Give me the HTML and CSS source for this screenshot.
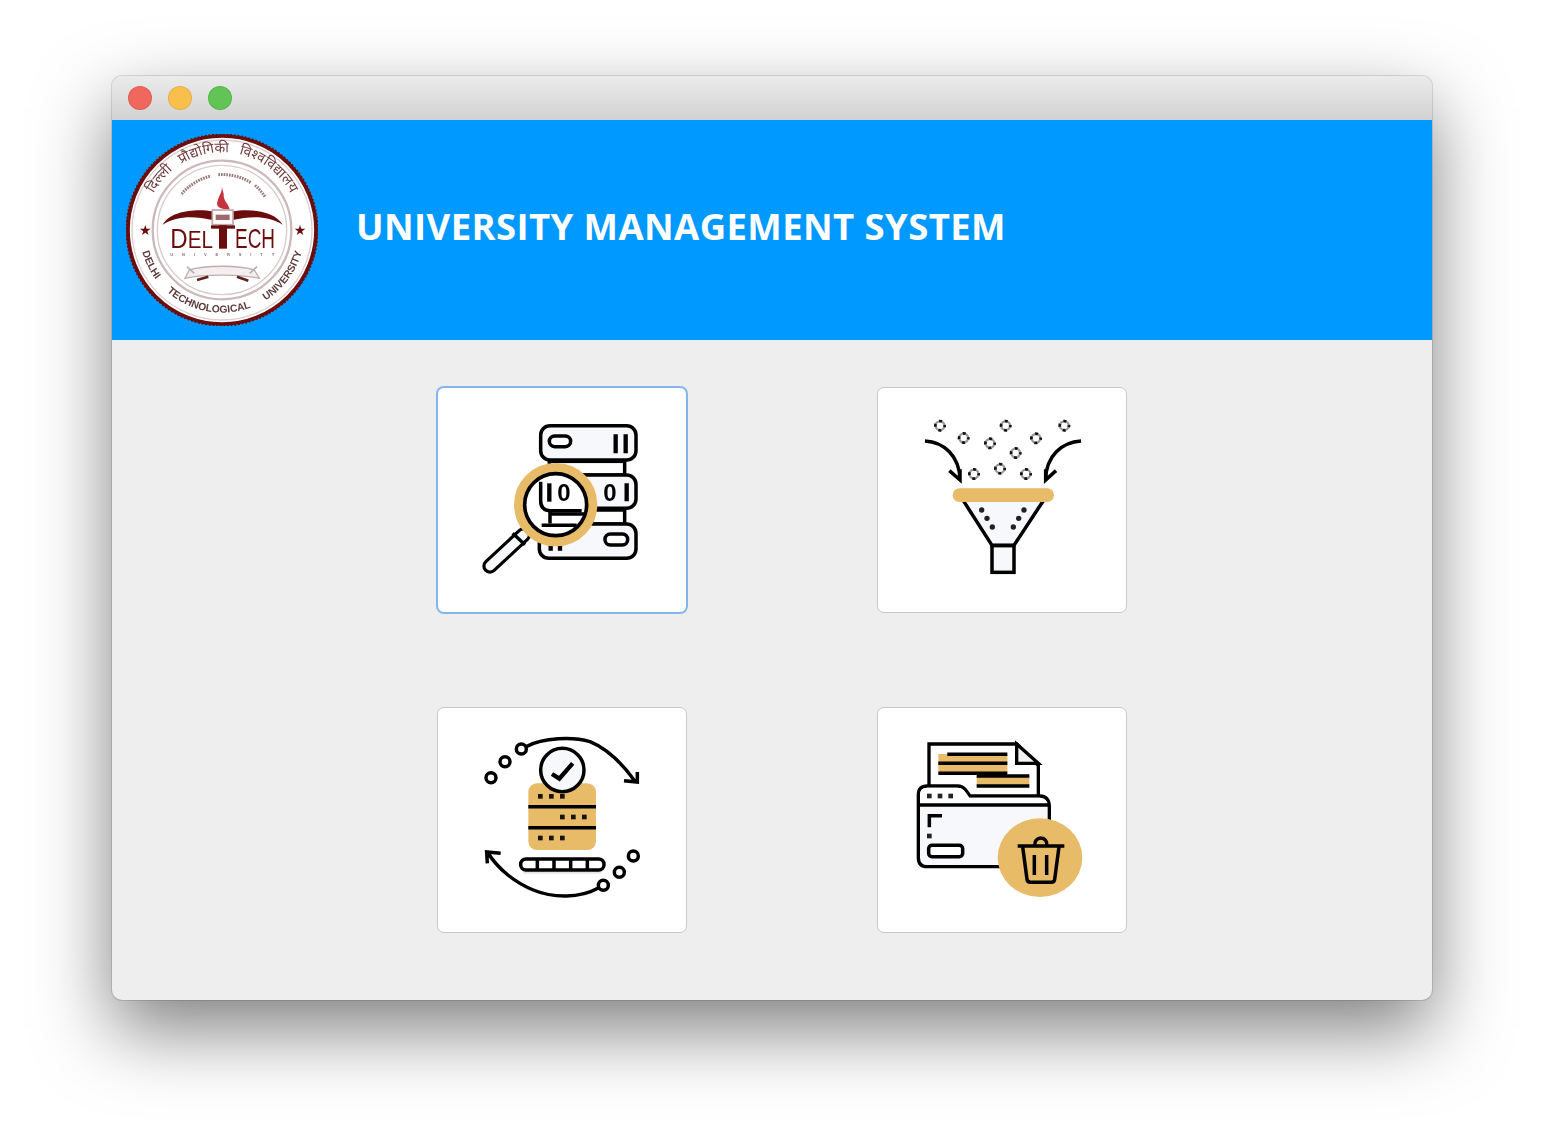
FILE: index.html
```html
<!DOCTYPE html>
<html lang="en">
<head>
    <meta charset="UTF-8">
    <meta name="viewport" content="width=device-width, initial-scale=1.0">
    <title>University Management System</title>
    <link rel="stylesheet" href="styles.css">
</head>
<body>
    <div class="window">
        <!-- Title bar with the three traffic lights -->
        <div class="titlebar">
            <span class="light light-red"></span>
            <span class="light light-yellow"></span>
            <span class="light light-green"></span>
        </div>

        <!-- Blue header with seal and system name -->
        <header class="header">
            <svg class="logo" viewBox="45 192 576 576" aria-label="Delhi Technological University seal">
                <defs>
                    <path id="ring-top" d="M100 480 A233 233 0 0 1 566 480"/>
                    <path id="ring-bottom" d="M85 480 A248 248 0 0 0 581 480"/>
                </defs>
                <circle cx="333" cy="480" r="282" fill="#fff" stroke="#6b0d0d" stroke-width="11"/>
                <circle cx="333" cy="480" r="287" fill="none" stroke="#6b0d0d" stroke-width="5" stroke-dasharray="6 5"/>
                <circle cx="333" cy="480" r="270" fill="none" stroke="#dccdcd" stroke-width="4"/>
                <circle cx="333" cy="480" r="208" fill="none" stroke="#cbb9b9" stroke-width="7"/>
                <circle cx="333" cy="480" r="194" fill="none" stroke="#d9cccc" stroke-width="4"/>

                <text class="seal-hindi"><textPath href="#ring-top" startOffset="50%" text-anchor="middle">दिल्ली  प्रौद्योगिकी  विश्वविद्यालय</textPath></text>
                <text class="seal-name"><textPath href="#ring-bottom" startOffset="50%" text-anchor="middle">DELHI TECHNOLOGICAL UNIVERSITY</textPath></text>
                <text class="seal-star" x="103" y="494">★</text>
                <text class="seal-star" x="567" y="494">★</text>

                <!-- motto, too small to read -->
                <path d="M212 372 A165 165 0 0 1 300 318" class="seal-motto"/>
                <path d="M322 314 A165 165 0 0 1 420 338" class="seal-motto"/>
                <path d="M432 346 A165 165 0 0 1 462 380" class="seal-motto"/>

                <!-- torch and wings -->
                <path d="M330 340 C338 362 326 372 320 392 C314 408 322 418 356 418 C352 400 336 392 338 372 Z" fill="#c5343c"/>
                <path d="M155 464 C180 420 260 416 305 424 L305 450 C250 438 200 436 155 464 Z" fill="#6b0d0d"/>
                <path d="M515 464 C490 420 410 416 365 424 L365 450 C420 438 470 436 515 464 Z" fill="#6b0d0d"/>
                <rect x="304" y="420" width="62" height="44" fill="#fff" stroke="#c2a7a7" stroke-width="5"/>
                <rect x="314" y="434" width="42" height="16" fill="#a06a6a"/>
                <rect x="300" y="466" width="72" height="10" fill="#6b0d0d"/>
                <rect x="324" y="466" width="24" height="70" fill="#6b0d0d"/>

                <text class="seal-big" x="178" y="535" textLength="128" lengthAdjust="spacingAndGlyphs">D<tspan class="seal-small">EL</tspan></text>
                <text class="seal-small seal-ech" x="372" y="535" textLength="120" lengthAdjust="spacingAndGlyphs">ECH</text>
                <text class="seal-spaced" x="178" y="558" textLength="312">UNIVERSITY</text>

                <!-- ribbon -->
                <path d="M235 600 C280 585 385 585 430 600 L445 625 C385 612 280 612 222 625 Z" fill="#f4eeee" stroke="#bfaeae" stroke-width="4"/>
                <path d="M228 590 L250 610 M438 590 L416 610" stroke="#bfaeae" stroke-width="5"/>
                <path d="M258 630 L292 620 M378 620 L412 632" stroke="#5c2020" stroke-width="8"/>
            </svg>
            <h1 class="title">UNIVERSITY MANAGEMENT SYSTEM</h1>
        </header>

        <!-- The four action buttons -->
        <main class="actions">
            <button class="action action-focus" aria-label="Search records">
                <svg class="icon" viewBox="24 24 744 672">
                    <g class="line">
                        <rect class="soft" x="332" y="137" width="286" height="103" rx="28"/>
                        <rect class="paper" x="358" y="244" width="226" height="41"/>
                        <rect class="soft" x="332" y="285" width="286" height="100" rx="28"/>
                        <rect class="paper" x="358" y="390" width="226" height="42"/>
                        <rect class="soft" x="328" y="432" width="290" height="103" rx="28"/>
                        <rect class="paper" x="358" y="168" width="64" height="32" rx="16"/>
                        <rect class="paper" x="525" y="462" width="68" height="33" rx="16"/>
                        <path class="heavy" d="M557 163 V220 M587 163 V220 M590 310 V364 M362 498 V512 M390 498 V512"/>
                    </g>
                    <text class="bits" x="520" y="362">0</text>
                    <!-- handle -->
                    <path d="M180 558 L280 465" stroke="#000" stroke-width="46" stroke-linecap="round"/>
                    <path d="M180 558 L280 465" stroke="#f6f8fb" stroke-width="27" stroke-linecap="round"/>
                    <path d="M248 460 L285 494" stroke="#000" stroke-width="10"/>
                    <!-- lens -->
                    <circle cx="377" cy="374" r="95" fill="#fff"/>
                    <g class="line">
                        <path d="M332 305 V362 Q332 392 362 392 H455"/>
                        <path d="M360 395 V430 M360 402 H462 M335 436 H440"/>
                        <path class="heavy" d="M358 310 V365"/>
                    </g>
                    <text class="bits" x="382" y="362">0</text>
                    <circle cx="377" cy="374" r="110" fill="none" stroke="#e8bb69" stroke-width="30"/>
                    <circle cx="377" cy="374" r="93" fill="none" stroke="#000" stroke-width="11"/>
                </svg>
            </button>

            <button class="action" aria-label="Filter records">
                <svg class="icon" viewBox="24 24 744 672">
                    <defs>
                        <g id="grain">
                            <circle r="13" fill="#fff" stroke="#999" stroke-width="7"/>
                            <circle r="14" fill="none" stroke="#111" stroke-width="8" stroke-dasharray="9 13" stroke-dashoffset="4.5"/>
                        </g>
                    </defs>
                    <use href="#grain" x="210" y="137"/>
                    <use href="#grain" x="407" y="137"/>
                    <use href="#grain" x="583" y="137"/>
                    <use href="#grain" x="281" y="174"/>
                    <use href="#grain" x="360" y="190"/>
                    <use href="#grain" x="498" y="175"/>
                    <use href="#grain" x="437" y="219"/>
                    <use href="#grain" x="312" y="282"/>
                    <use href="#grain" x="390" y="266"/>
                    <use href="#grain" x="468" y="282"/>
                    <g class="line">
                        <path d="M165 183 C222 186 268 228 270 298 M238 272 L270 300 L270 268"/>
                        <path d="M633 183 C576 186 528 228 527 298 M558 272 L527 300 L527 268"/>
                    </g>
                    <path d="M280 362 H520 L432 496 H366 Z" fill="#f6f8fb"/>
                    <g class="line">
                        <path d="M280 362 L366 496 H432 L520 362"/>
                        <rect class="soft" x="366" y="497" width="66" height="80"/>
                    </g>
                    <rect x="248" y="325" width="304" height="41" rx="20" fill="#e8bb69"/>
                    <g fill="#222">
                        <circle cx="335" cy="390" r="8"/>
                        <circle cx="351" cy="415" r="8"/>
                        <circle cx="367" cy="441" r="8"/>
                        <circle cx="462" cy="390" r="8"/>
                        <circle cx="446" cy="415" r="8"/>
                        <circle cx="430" cy="441" r="8"/>
                    </g>
                </svg>
            </button>

            <button class="action" aria-label="Verify records">
                <svg class="icon" viewBox="24 24 744 672">
                    <rect x="295" y="250" width="203" height="200" rx="26" fill="#e8bb69"/>
                    <rect x="280" y="512" width="234" height="9" fill="#e4e4e4"/>
                    <g class="line">
                        <path d="M295 320 H498 M295 383 H498"/>
                        <circle class="soft" cx="397" cy="210" r="65"/>
                        <path class="heavy" d="M366 222 L388 236 L428 190"/>
                        <rect class="paper" x="272" y="477" width="250" height="33" rx="16"/>
                        <path d="M322 477 V510 M372 477 V510 M422 477 V510 M472 477 V510"/>
                        <circle class="paper" cx="183" cy="233" r="15"/>
                        <circle class="paper" cx="225" cy="185" r="15"/>
                        <circle class="paper" cx="274" cy="147" r="15"/>
                        <circle class="paper" cx="610" cy="468" r="15"/>
                        <circle class="paper" cx="568" cy="517" r="15"/>
                        <circle class="paper" cx="520" cy="556" r="15"/>
                        <path d="M288 140 C340 112 430 110 480 125 C530 145 580 195 616 245 M582 242 L622 246 L622 216"/>
                        <path d="M505 564 C450 595 370 595 310 570 C260 550 205 510 172 456 M172 490 L170 456 L212 460"/>
                    </g>
                    <g fill="#1a1208">
                        <rect x="324" y="282" width="14" height="14"/>
                        <rect x="357" y="282" width="14" height="14"/>
                        <rect x="390" y="282" width="14" height="14"/>
                        <rect x="390" y="344" width="14" height="14"/>
                        <rect x="423" y="344" width="14" height="14"/>
                        <rect x="456" y="344" width="14" height="14"/>
                        <rect x="324" y="407" width="14" height="14"/>
                        <rect x="357" y="407" width="14" height="14"/>
                        <rect x="390" y="407" width="14" height="14"/>
                    </g>
                </svg>
            </button>

            <button class="action" aria-label="Delete records">
                <svg class="icon" viewBox="24 24 744 672">
                    <path d="M177 262 V132 H440 L505 197 V292 H177 Z" fill="#fff" stroke="#000" stroke-width="10"/>
                    <path d="M440 132 V190 H505 Z" fill="#f1f3f7" stroke="#000" stroke-width="10"/>
                    <rect x="205" y="162" width="207" height="58" fill="#e8bb69"/>
                    <rect x="320" y="228" width="158" height="30" fill="#e8bb69"/>
                    <g class="line">
                        <path d="M232 163 H412 M205 190 H412 M205 220 H412 M320 228 H478 M320 258 H478"/>
                    </g>
                    <path d="M145 285 Q145 258 172 258 H262 Q278 258 287 270 L300 288 H510 Q538 290 538 320 V500 H172 Q145 500 145 473 Z" fill="#f6f8fb" stroke="#000" stroke-width="10"/>
                    <path d="M150 313 V285 Q150 263 172 263 H262 Q276 263 284 274 L298 293 H510 Q531 295 533 313 Z" fill="#fff"/>
                    <g class="line">
                        <path d="M145 315 H538"/>
                        <path d="M178 382 V347 H216"/>
                        <rect class="paper" x="176" y="436" width="102" height="34" rx="10"/>
                    </g>
                    <g fill="#222">
                        <rect x="171" y="281" width="14" height="14"/>
                        <rect x="203" y="281" width="14" height="14"/>
                        <rect x="235" y="281" width="14" height="14"/>
                        <rect x="171" y="401" width="14" height="14"/>
                    </g>
                    <ellipse cx="510" cy="473" rx="127" ry="118" fill="#e8bb69"/>
                    <g class="line">
                        <path d="M443 438 H583"/>
                        <path d="M495 436 A18 18 0 1 1 530 436"/>
                        <path d="M458 440 L471 538 Q472 547 482 547 H543 Q553 547 554 538 L567 440"/>
                        <path d="M493 465 V525 M530 465 V525"/>
                    </g>
                </svg>
            </button>
        </main>
    </div>
</body>
</html>
```

FILE: styles.css
```css
/* General Reset */
html, body {
    margin: 0;
    padding: 0;
    background: #ffffff;
}

body {
    height: 1148px;
    padding: 76px 112px 0;
    box-sizing: border-box;
    overflow: hidden;
    font-family: "Open Sans", sans-serif;
}

/* Main Window */
.window {
    width: 1320px;
    height: 924px;
    display: flex;
    flex-direction: column;
    background: #eeeeee;
    border-radius: 10px;
    overflow: hidden;
    box-shadow: 0 30px 75px rgba(0, 0, 0, 0.5), 0 0 0 1px rgba(0, 0, 0, 0.12);
}

/* Title Bar */
.titlebar {
    height: 44px;
    flex: none;
    display: flex;
    align-items: center;
    gap: 16px;
    padding-left: 16px;
    box-sizing: border-box;
    background: linear-gradient(#ebebeb, #d2d2d2);
}

.light {
    width: 24px;
    height: 24px;
    border-radius: 50%;
    box-sizing: border-box;
    border: 1px solid rgba(0, 0, 0, 0.08);
}

.light-red { background: #f0675d; }
.light-yellow { background: #f8bf4d; }
.light-green { background: #61c454; }

/* Header */
.header {
    height: 220px;
    flex: none;
    display: flex;
    align-items: center;
    gap: 38px;
    padding-left: 14px;
    background: #0099ff;
}

.logo {
    width: 192px;
    height: 192px;
    flex: none;
    filter: blur(0.6px);
}

.title {
    margin: 0 0 8px;
    font-size: 36.5px;
    font-weight: 700;
    letter-spacing: 0.4px;
    color: #ffffff;
    white-space: nowrap;
}

/* Seal text */
.seal-hindi {
    font-family: "Noto Sans", sans-serif;
    font-size: 42px;
    word-spacing: 20px;
    fill: #6e3a3a;
}

.seal-name {
    font-family: "Liberation Sans", sans-serif;
    font-size: 31px;
    font-weight: bold;
    word-spacing: 40px;
    fill: #5f3c3c;
}

.seal-motto {
    fill: none;
    stroke: #9a7a7a;
    stroke-width: 9;
    stroke-dasharray: 5 3;
}

.seal-star {
    font-family: "DejaVu Sans", sans-serif;
    font-size: 42px;
    text-anchor: middle;
    fill: #6b0d0d;
}

.seal-big {
    font-family: "Liberation Sans", sans-serif;
    font-size: 84px;
    fill: #6b0d0d;
}

.seal-small {
    font-family: "Liberation Sans", sans-serif;
    font-size: 72px;
    fill: #6b0d0d;
}

.seal-ech {
    font-size: 82px;
}

.seal-spaced {
    font-family: "Liberation Sans", sans-serif;
    font-size: 12px;
    font-weight: bold;
    fill: #8a6a6a;
}

/* Buttons */
.actions {
    display: grid;
    grid-template-columns: 250px 250px;
    grid-auto-rows: 226px;
    column-gap: 190px;
    row-gap: 94px;
    padding: 47px 0 0 325px;
}

.action {
    display: block;
    padding: 0;
    background: #ffffff;
    border: 1px solid #c8c8c8;
    border-radius: 7px;
    overflow: hidden;
}

.action-focus {
    border-color: #83b4ee;
    box-shadow: 0 0 0 1px #83b4ee;
}

.icon {
    display: block;
    width: 248px;
    height: 224px;
    filter: blur(0.7px);
}

/* Icon strokes */
.line {
    fill: none;
    stroke: #000000;
    stroke-width: 10.5;
}

.heavy {
    stroke-width: 13;
}

.soft {
    fill: #f6f8fb;
}

.paper {
    fill: #ffffff;
}

.bits {
    font-family: "Liberation Sans", sans-serif;
    font-size: 72px;
    font-weight: bold;
    fill: #000000;
}
```
